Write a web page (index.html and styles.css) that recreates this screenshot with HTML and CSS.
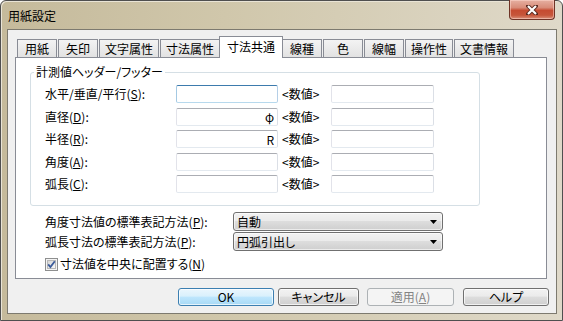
FILE: index.html
```html
<!DOCTYPE html>
<html lang="ja">
<head>
    <meta charset="UTF-8">
    <title>用紙設定</title>
    <link rel="stylesheet" href="styles.css">
</head>
<body>
<div class="window">
    <div class="titlebar">
        <span class="title">用紙設定</span>
        <div class="close">
            <svg width="12" height="10" viewBox="0 0 12 10">
                <path d="M2 1 L10 9 M10 1 L2 9" stroke="#5a2a20" stroke-width="4" stroke-linecap="square"/>
                <path d="M2 1 L10 9 M10 1 L2 9" stroke="#fff" stroke-width="2.2"/>
            </svg>
        </div>
    </div>

    <div class="client">
        <div class="tabs">
            <div class="tab">用紙</div>
            <div class="tab">矢印</div>
            <div class="tab">文字属性</div>
            <div class="tab">寸法属性</div>
            <div class="tab active">寸法共通</div>
            <div class="tab">線種</div>
            <div class="tab">色</div>
            <div class="tab">線幅</div>
            <div class="tab">操作性</div>
            <div class="tab">文書情報</div>
        </div>

        <div class="panel">
            <fieldset class="group">
                <legend>計測値ヘッダー/フッター</legend>
                <div class="rows">
                    <span class="lbl">水平/垂直/平行(<u>S</u>):</span>
                    <input class="txt focus" type="text">
                    <span class="num">&lt;数値&gt;</span>
                    <input class="txt" type="text">

                    <span class="lbl">直径(<u>D</u>):</span>
                    <input class="txt right" type="text" value="φ">
                    <span class="num">&lt;数値&gt;</span>
                    <input class="txt" type="text">

                    <span class="lbl">半径(<u>R</u>):</span>
                    <input class="txt right" type="text" value="R">
                    <span class="num">&lt;数値&gt;</span>
                    <input class="txt" type="text">

                    <span class="lbl">角度(<u>A</u>):</span>
                    <input class="txt" type="text">
                    <span class="num">&lt;数値&gt;</span>
                    <input class="txt" type="text">

                    <span class="lbl">弧長(<u>C</u>):</span>
                    <input class="txt" type="text">
                    <span class="num">&lt;数値&gt;</span>
                    <input class="txt" type="text">
                </div>
            </fieldset>

            <div class="opts">
                <div class="opt">
                    <span class="opt-lbl">角度寸法値の標準表記方法(<u>P</u>):</span>
                    <div class="combo"><span>自動</span>
                        <svg width="7" height="4" viewBox="0 0 7 4"><path d="M0 0 H7 L3.5 4 Z" fill="#000"/></svg>
                    </div>
                </div>
                <div class="opt">
                    <span class="opt-lbl">弧長寸法の標準表記方法(<u>P</u>):</span>
                    <div class="combo"><span>円弧引出し</span>
                        <svg width="7" height="4" viewBox="0 0 7 4"><path d="M0 0 H7 L3.5 4 Z" fill="#000"/></svg>
                    </div>
                </div>
                <label class="check">
                    <svg class="box" width="13" height="13" viewBox="0 0 13 13">
                        <defs>
                            <linearGradient id="cb" x1="0" y1="0" x2="1" y2="1">
                                <stop offset="0" stop-color="#d3d3d3"/>
                                <stop offset="1" stop-color="#fafafa"/>
                            </linearGradient>
                        </defs>
                        <rect x="0.5" y="0.5" width="12" height="12" fill="#f4f4f4" stroke="#8e8f8f"/>
                        <rect x="2.5" y="2.5" width="8" height="8" fill="url(#cb)" stroke="#b8b8b8"/>
                        <path d="M3.2 6.4 L5.4 9 L9.8 3.2" fill="none" stroke="#3b5b9a" stroke-width="1.8"/>
                    </svg>
                    <span>寸法値を中央に配置する(<u>N</u>)</span>
                </label>
            </div>
        </div>

        <div class="buttons">
            <div class="btn default w-ok">OK</div>
            <div class="btn w-cancel">キャンセル</div>
            <div class="btn disabled w-apply">適用(<u>A</u>)</div>
            <div class="btn w-help">ヘルプ</div>
        </div>
    </div>
</div>
</body>
</html>
```

FILE: styles.css
```css
* {
    box-sizing: border-box;
}
body {
    margin: 0;
    font-family: "Noto Sans CJK JP", "Noto Sans", sans-serif;
    font-size: 12px;
    font-feature-settings: "palt";
    color: #000;
    background: #fff;
}
u {
    text-decoration: underline;
    text-underline-offset: 1px;
}

/* window frame */
.window {
    width: 563px;
    height: 321px;
    border: 1px solid #4f4f4f;
    border-radius: 6px 6px 0 0;
    background: linear-gradient(90deg, #c5ba9b 0%, #d0c7ab 40%, #dfd9c9 100%);
    box-shadow: inset 1px 1px 0 #e9e4d6;
    padding: 0 5px 6px 6px;
    display: flex;
    flex-direction: column;
}
.titlebar {
    height: 28px;
    display: flex;
    justify-content: space-between;
    align-items: flex-start;
}
.title {
    padding: 8px 0 0 1px;
    line-height: 14px;
}
.close {
    width: 46px;
    height: 20px;
    margin: -1px 2px 0 0;
    border: 1px solid #6e3326;
    border-top: none;
    border-radius: 0 0 4px 4px;
    background: linear-gradient(#e6b0a2 0%, #d88c79 40%, #c54b31 55%, #c6553a 80%, #d9907a 100%);
    box-shadow: inset 0 0 0 1px rgba(255, 220, 210, 0.5);
    display: flex;
    align-items: center;
    justify-content: center;
}

.client {
    flex: 1;
    border: 1px solid #7d7a6f;
    background: #f0f0f0;
    display: flex;
    flex-direction: column;
}

/* tabs */
.tabs {
    display: flex;
    align-items: flex-end;
    height: 27px;
    padding: 6px 0 0 9px;
}
.tab {
    height: 18px;
    min-width: 40px;
    padding: 0 5px;
    margin-right: 1px;
    border: 1px solid #898c95;
    border-bottom: none;
    background: linear-gradient(#f3f3f3, #e2e2e2);
    line-height: 17px;
    text-align: center;
    white-space: nowrap;
}
.tab.active {
    position: relative;
    z-index: 1;
    height: 22px;
    margin: 0 -1px -1px -2px;
    padding: 0 7px;
    background: #fff;
    line-height: 20px;
}

.panel {
    height: 222px;
    margin: 0 9px 0 7px;
    border: 1px solid #898c95;
    background: #fff;
}

/* group box */
.group {
    width: 450px;
    margin: 8px 0 0 14px;
    padding: 7px 0 12px 0;
    border: 1px solid #d5dfe5;
    border-radius: 3px;
}
.group legend {
    margin-left: 3px;
    padding: 0 2px;
    line-height: 12px;
}
.rows {
    display: grid;
    grid-template-columns: 131px 102px 53px 103px;
    grid-auto-rows: 18px;
    row-gap: 4.5px;
    padding-left: 14px;
}
.lbl {
    align-self: center;
    line-height: 14px;
    white-space: nowrap;
}
.num {
    align-self: center;
    padding-left: 4px;
    line-height: 14px;
}
.txt {
    width: 100%;
    height: 18px;
    margin: 0;
    padding: 0 3px;
    border: 1px solid;
    border-color: #abadb3 #dbdfe6 #e3e9ef #e2e3ea;
    border-radius: 2px;
    font: inherit;
    background: #fff;
    outline: none;
}
.txt.focus {
    border-color: #3d7bad #b5cfe7 #b7d9ed #a4c9e3;
}
.txt.right {
    text-align: right;
}

/* lower options */
.opts {
    padding: 6px 0 0 29px;
}
.opt {
    display: flex;
    align-items: center;
    margin-bottom: 1px;
}
.opt-lbl {
    width: 188px;
    white-space: nowrap;
}
.combo {
    width: 210px;
    height: 19px;
    padding: 0 5px 0 3px;
    border: 1px solid #707070;
    border-radius: 3px;
    background: linear-gradient(#f2f2f2 0%, #ebebeb 45%, #dddddd 50%, #cfcfcf 100%);
    box-shadow: inset 0 0 0 1px rgba(255, 255, 255, 0.6);
    display: flex;
    align-items: center;
    justify-content: space-between;
    line-height: 14px;
}
.check {
    display: flex;
    align-items: center;
    gap: 2px;
    margin-top: 6px;
    line-height: 14px;
}

/* bottom buttons */
.buttons {
    display: flex;
    justify-content: flex-end;
    margin-top: 9px;
    padding-right: 7px;
}
.btn {
    height: 18px;
    border: 1px solid #707070;
    border-radius: 3px;
    background: linear-gradient(#f2f2f2 0%, #ebebeb 45%, #dddddd 50%, #cfcfcf 100%);
    box-shadow: inset 0 0 0 1px rgba(255, 255, 255, 0.7);
    text-align: center;
    line-height: 16px;
}
.btn.default {
    border-color: #3c7fb1;
    background: linear-gradient(#eaf6fd 0%, #d9f0fc 45%, #bee6fd 50%, #a7d9f5 100%);
}
.btn.disabled {
    border-color: #adb2b5;
    background: #f4f4f4;
    box-shadow: none;
    color: #838383;
}
.w-ok {
    width: 96px;
    margin-right: 4px;
}
.w-cancel {
    width: 81px;
    margin-right: 8px;
}
.w-apply {
    width: 87px;
    margin-right: 9px;
}
.w-help {
    width: 86px;
}
```
